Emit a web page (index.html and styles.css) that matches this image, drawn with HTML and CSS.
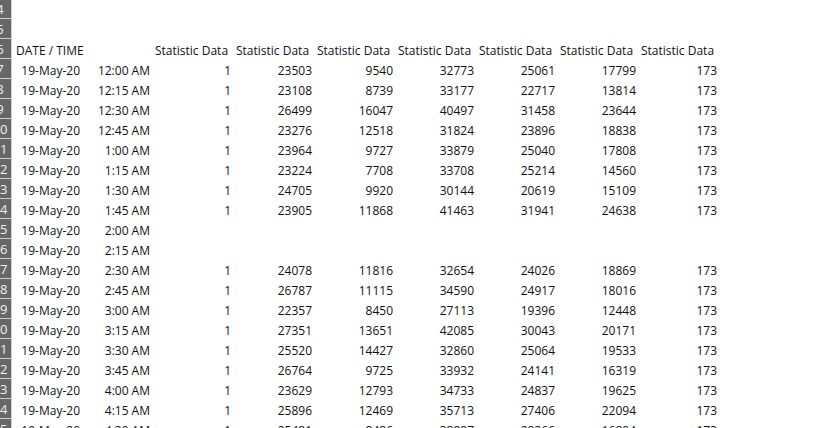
FILE: index.html
```html
<!DOCTYPE html>
<html>
<head>
<meta charset="utf-8">
<link rel="stylesheet" href="styles.css">
</head>
<body>
<div class="sheet">
  <div class="row"><div class="rh"><div class="rn">4</div></div></div>
  <div class="row"><div class="rh"><div class="rn">5</div></div></div>
  <div class="row"><div class="rh"><div class="rn">6</div></div><div class="c l">DATE / TIME</div><div class="c"></div><div class="c l">Statistic Data</div><div class="c l">Statistic Data</div><div class="c l">Statistic Data</div><div class="c l">Statistic Data</div><div class="c l">Statistic Data</div><div class="c l">Statistic Data</div><div class="c l">Statistic Data</div></div>
  <div class="row"><div class="rh"><div class="rn">7</div></div><div class="c">19-May-20</div><div class="c">12:00 AM</div><div class="c">1</div><div class="c">23503</div><div class="c">9540</div><div class="c">32773</div><div class="c">25061</div><div class="c">17799</div><div class="c">173</div></div>
  <div class="row"><div class="rh"><div class="rn">8</div></div><div class="c">19-May-20</div><div class="c">12:15 AM</div><div class="c">1</div><div class="c">23108</div><div class="c">8739</div><div class="c">33177</div><div class="c">22717</div><div class="c">13814</div><div class="c">173</div></div>
  <div class="row"><div class="rh"><div class="rn">9</div></div><div class="c">19-May-20</div><div class="c">12:30 AM</div><div class="c">1</div><div class="c">26499</div><div class="c">16047</div><div class="c">40497</div><div class="c">31458</div><div class="c">23644</div><div class="c">173</div></div>
  <div class="row"><div class="rh"><div class="rn">10</div></div><div class="c">19-May-20</div><div class="c">12:45 AM</div><div class="c">1</div><div class="c">23276</div><div class="c">12518</div><div class="c">31824</div><div class="c">23896</div><div class="c">18838</div><div class="c">173</div></div>
  <div class="row"><div class="rh"><div class="rn">11</div></div><div class="c">19-May-20</div><div class="c">1:00 AM</div><div class="c">1</div><div class="c">23964</div><div class="c">9727</div><div class="c">33879</div><div class="c">25040</div><div class="c">17808</div><div class="c">173</div></div>
  <div class="row"><div class="rh"><div class="rn">12</div></div><div class="c">19-May-20</div><div class="c">1:15 AM</div><div class="c">1</div><div class="c">23224</div><div class="c">7708</div><div class="c">33708</div><div class="c">25214</div><div class="c">14560</div><div class="c">173</div></div>
  <div class="row"><div class="rh"><div class="rn">13</div></div><div class="c">19-May-20</div><div class="c">1:30 AM</div><div class="c">1</div><div class="c">24705</div><div class="c">9920</div><div class="c">30144</div><div class="c">20619</div><div class="c">15109</div><div class="c">173</div></div>
  <div class="row"><div class="rh"><div class="rn">14</div></div><div class="c">19-May-20</div><div class="c">1:45 AM</div><div class="c">1</div><div class="c">23905</div><div class="c">11868</div><div class="c">41463</div><div class="c">31941</div><div class="c">24638</div><div class="c">173</div></div>
  <div class="row"><div class="rh"><div class="rn">15</div></div><div class="c">19-May-20</div><div class="c">2:00 AM</div></div>
  <div class="row"><div class="rh"><div class="rn">16</div></div><div class="c">19-May-20</div><div class="c">2:15 AM</div></div>
  <div class="row"><div class="rh"><div class="rn">17</div></div><div class="c">19-May-20</div><div class="c">2:30 AM</div><div class="c">1</div><div class="c">24078</div><div class="c">11816</div><div class="c">32654</div><div class="c">24026</div><div class="c">18869</div><div class="c">173</div></div>
  <div class="row"><div class="rh"><div class="rn">18</div></div><div class="c">19-May-20</div><div class="c">2:45 AM</div><div class="c">1</div><div class="c">26787</div><div class="c">11115</div><div class="c">34590</div><div class="c">24917</div><div class="c">18016</div><div class="c">173</div></div>
  <div class="row"><div class="rh"><div class="rn">19</div></div><div class="c">19-May-20</div><div class="c">3:00 AM</div><div class="c">1</div><div class="c">22357</div><div class="c">8450</div><div class="c">27113</div><div class="c">19396</div><div class="c">12448</div><div class="c">173</div></div>
  <div class="row"><div class="rh"><div class="rn">20</div></div><div class="c">19-May-20</div><div class="c">3:15 AM</div><div class="c">1</div><div class="c">27351</div><div class="c">13651</div><div class="c">42085</div><div class="c">30043</div><div class="c">20171</div><div class="c">173</div></div>
  <div class="row"><div class="rh"><div class="rn">21</div></div><div class="c">19-May-20</div><div class="c">3:30 AM</div><div class="c">1</div><div class="c">25520</div><div class="c">14427</div><div class="c">32860</div><div class="c">25064</div><div class="c">19533</div><div class="c">173</div></div>
  <div class="row"><div class="rh"><div class="rn">22</div></div><div class="c">19-May-20</div><div class="c">3:45 AM</div><div class="c">1</div><div class="c">26764</div><div class="c">9725</div><div class="c">33932</div><div class="c">24141</div><div class="c">16319</div><div class="c">173</div></div>
  <div class="row"><div class="rh"><div class="rn">23</div></div><div class="c">19-May-20</div><div class="c">4:00 AM</div><div class="c">1</div><div class="c">23629</div><div class="c">12793</div><div class="c">34733</div><div class="c">24837</div><div class="c">19625</div><div class="c">173</div></div>
  <div class="row"><div class="rh"><div class="rn">24</div></div><div class="c">19-May-20</div><div class="c">4:15 AM</div><div class="c">1</div><div class="c">25896</div><div class="c">12469</div><div class="c">35713</div><div class="c">27406</div><div class="c">22094</div><div class="c">173</div></div>
  <div class="row"><div class="rh"><div class="rn">25</div></div><div class="c">19-May-20</div><div class="c">4:30 AM</div><div class="c">1</div><div class="c">25481</div><div class="c">8486</div><div class="c">38887</div><div class="c">28366</div><div class="c">16894</div><div class="c">173</div></div>
</div>
</body>
</html>
```
FILE: styles.css
```css
html, body {
  margin: 0;
  padding: 0;
  background: #ffffff;
  overflow: hidden;
  height: 428px;
}
.sheet {
  margin-top: -1px;
  font-family: "Open Sans", sans-serif;
  font-size: 12px;
  color: #111111;
}
.row {
  display: grid;
  grid-template-columns: 12px 71px 70px repeat(7, 81px) 1fr;
  height: 20px;
}
.rh {
  box-sizing: border-box;
  height: 20px;
  background: #676767;
  border-right: 1px solid #cfcfcf;
  border-bottom: 1px solid #cfcfcf;
  overflow: hidden;
}
.rn {
  width: 22px;
  margin-left: -11px;
  padding-top: 1px;
  text-align: center;
  color: #f2f2f2;
  font-size: 13px;
  line-height: 18px;
}
.c {
  box-sizing: border-box;
  height: 20px;
  padding-top: 2px;
  line-height: 20px;
  text-align: right;
  padding-right: 3px;
  white-space: nowrap;
}
.c.l {
  text-align: left;
  padding-left: 2px;
  padding-right: 0;
}
.row > .c.l:nth-child(2) {
  padding-left: 4px;
}
```
